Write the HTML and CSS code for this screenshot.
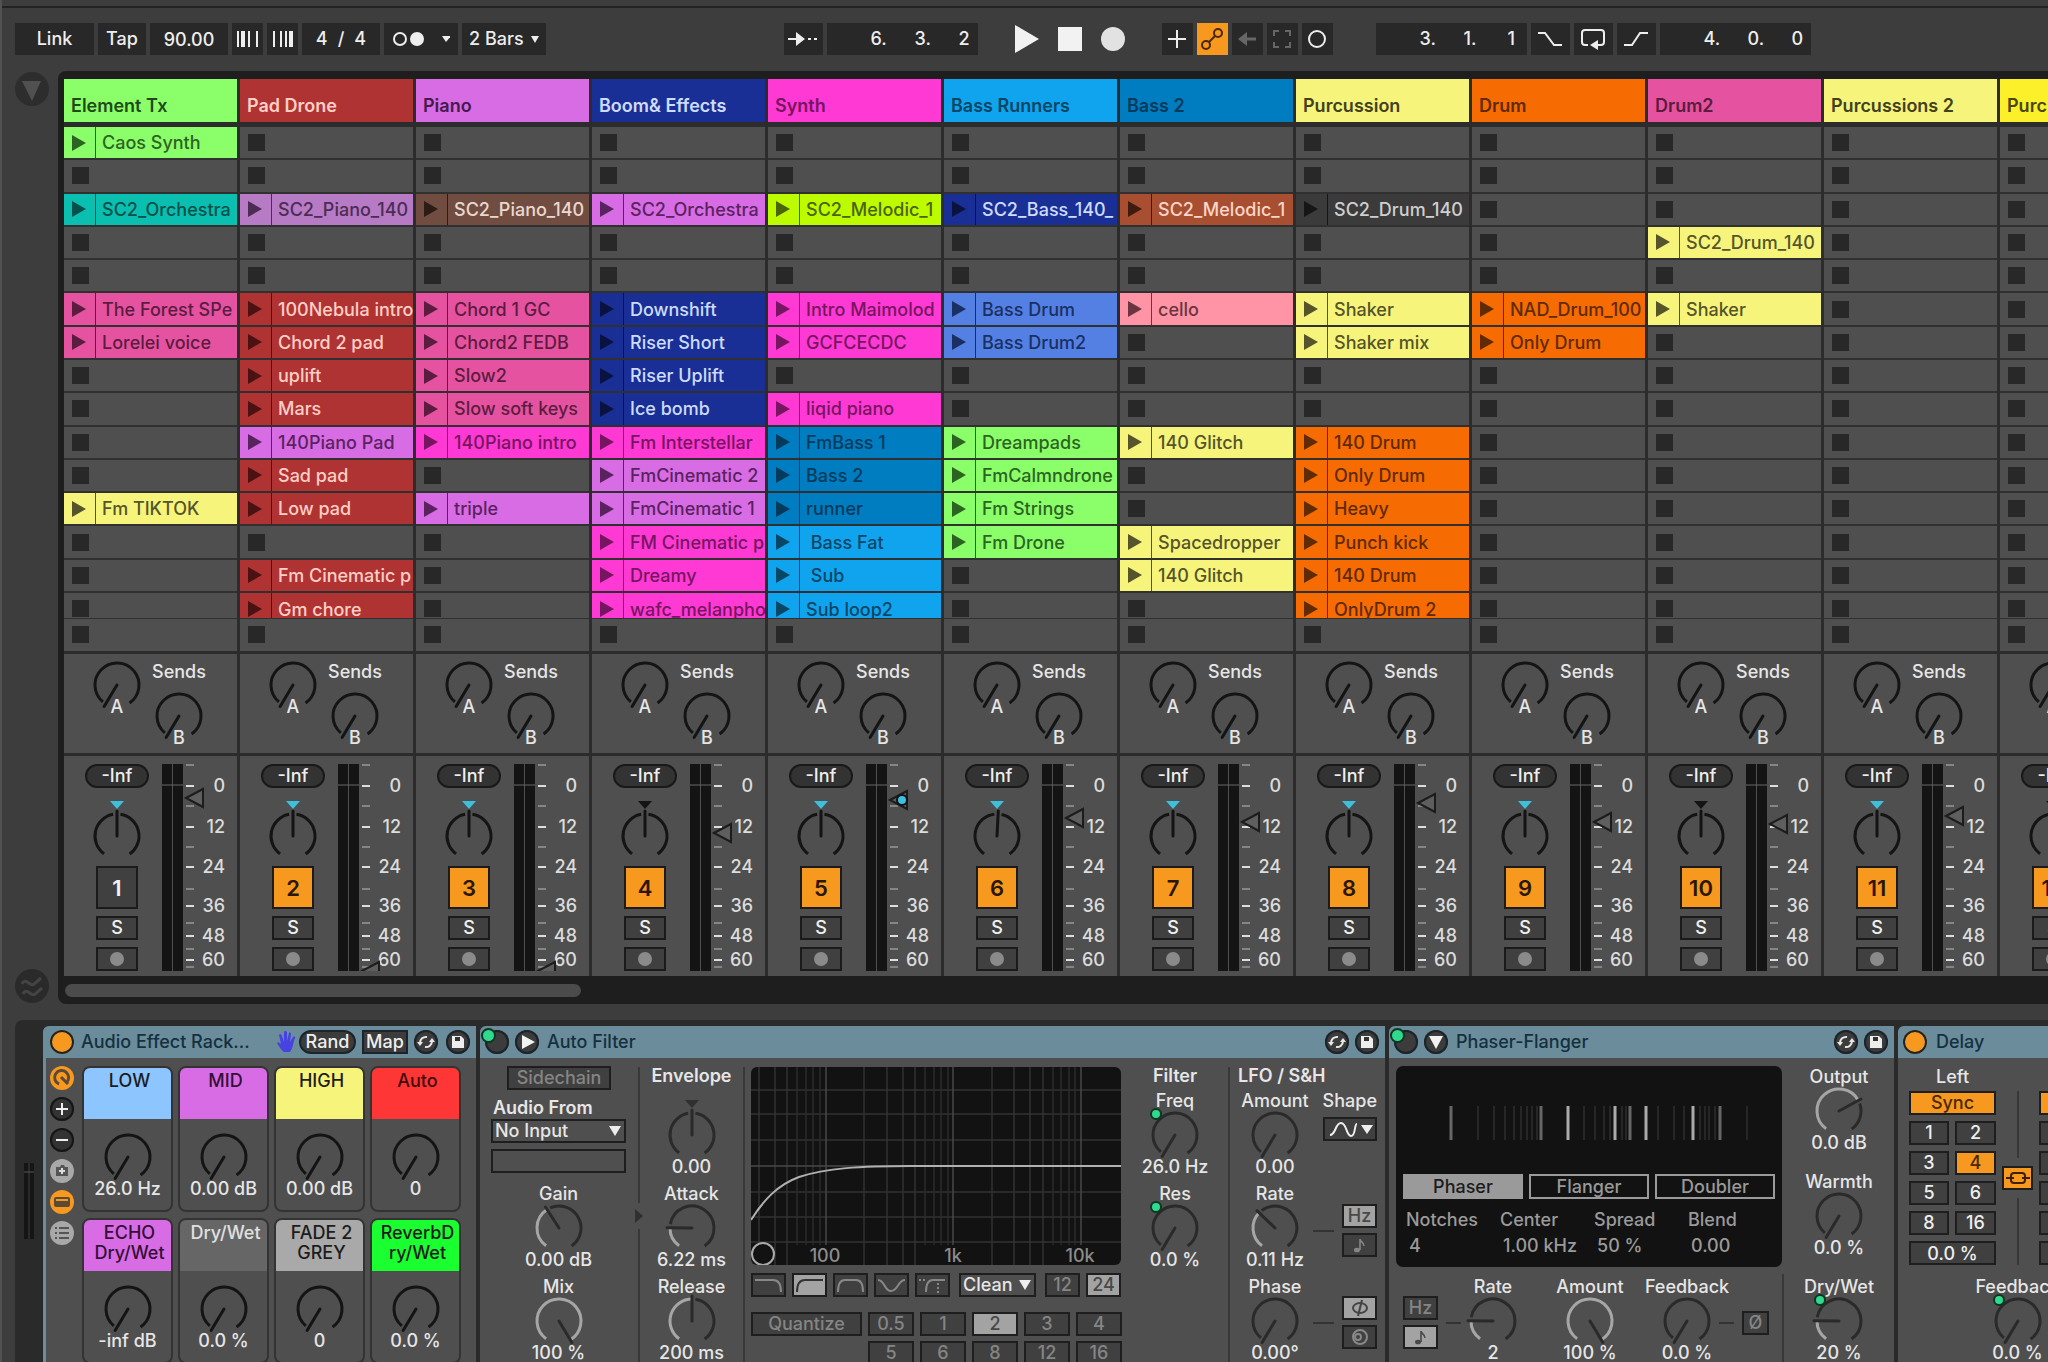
FILE: index.html
```html
<!DOCTYPE html>
<html lang="en">
<head>
<meta charset="utf-8">
<title>Live Set</title>
<link rel="stylesheet" href="styles.css">
</head>
<body>
<svg class="defs" aria-hidden="true">
  <symbol id="i-swap" viewBox="0 0 24 24"><path d="M6 13a6 6 0 0 1 7-6M18 11a6 6 0 0 1-7 6" fill="none" stroke="#e8e8e8" stroke-width="2"/><path d="M3 12l3 4 3-4zM15 12l3-4 3 4z" fill="#e8e8e8"/></symbol>
  <symbol id="i-save" viewBox="0 0 24 24"><path d="M6 6h9l3 3v9H6z" fill="#eee"/><path d="M9 7h5v4H9z" fill="#333"/></symbol>
  <symbol id="i-note" viewBox="0 0 16 20"><ellipse cx="5" cy="15" rx="3" ry="2.3" fill="currentColor"/><path d="M8 15V4c0 3 4 3 4 7" fill="none" stroke="currentColor" stroke-width="1.6"/></symbol>
</svg>

<header class="toolbar">
  <div class="group">
    <button class="tb w80">Link</button>
    <button class="tb w48">Tap</button>
    <input class="tb w78 center" aria-label="Tempo" value="90.00">
    <button class="tb w32" aria-label="Nudge down"><svg width="22" height="16"><path d="M1 0v16M12 0v16M20 0v16" stroke="#eee" stroke-width="2"/><path d="M6 0v16" stroke="#eee" stroke-width="4"/></svg></button>
    <button class="tb w32" aria-label="Nudge up"><svg width="22" height="16"><path d="M2 0v16M9 0v16M14 0v16M20 0v16" stroke="#eee" stroke-width="2"/><path d="M19 0v16" stroke="#eee" stroke-width="4"/></svg></button>
    <button class="tb w78 sig"><span>4</span><span>/</span><span>4</span></button>
    <button class="tb w74" aria-label="Metronome"><svg width="58" height="16"><circle cx="8" cy="8" r="6" fill="none" stroke="#eee" stroke-width="2"/><circle cx="25" cy="8" r="7" fill="#eee"/><path d="M50 5h9l-5 6z" fill="#eee"/></svg></button>
    <div class="pick tb w84"><select aria-label="Quantization"><option>2 Bars</option></select></div>
  </div>
  <div class="middle">
    <div class="group">
      <button class="tb w39" aria-label="Follow"><svg width="30" height="16"><path d="M0 8h10M20 8h3M26 8h3" stroke="#eee" stroke-width="2"/><path d="M8 1l9 7-9 7z" fill="#eee"/></svg></button>
      <div class="tb pos"><input aria-label="Bar" value="6."><input aria-label="Beat" value="3."><input aria-label="Sixteenth" value="2"></div>
    </div>
    <div class="group transport">
      <button aria-label="Play"><svg width="24" height="28"><path d="M0 0l24 14L0 28z" fill="#f2f2f2"/></svg></button>
      <button aria-label="Stop"><svg width="24" height="24"><path d="M0 0h24v24H0z" fill="#f2f2f2"/></svg></button>
      <button aria-label="Record"><svg width="24" height="24"><circle cx="12" cy="12" r="12" fill="#e2e2e2"/></svg></button>
    </div>
    <div class="group">
      <button class="tb w32" aria-label="Overdub"><svg width="18" height="18"><path d="M0 9h18M9 0v18" stroke="#eee" stroke-width="2"/></svg></button>
      <button class="tb w32 on" aria-label="Automation arm"><svg width="22" height="22" fill="none" stroke="#4a2800" stroke-width="2"><circle cx="5" cy="17" r="4"/><circle cx="17" cy="5" r="4"/><path d="M8 14l6-6"/></svg></button>
      <button class="tb w32" aria-label="Re-enable automation"><svg width="18" height="16"><path d="M6 8h12" stroke="#666" stroke-width="3"/><path d="M9 1v14L0 8z" fill="#666"/></svg></button>
      <button class="tb w32" aria-label="Capture"><svg width="18" height="18" fill="none" stroke="#666" stroke-width="2"><path d="M1 6V1h5M12 1h5v5M17 12v5h-5M6 17H1v-5"/></svg></button>
      <button class="tb w32" aria-label="Session record"><svg width="18" height="18"><circle cx="9" cy="9" r="8" fill="none" stroke="#eee" stroke-width="2"/></svg></button>
    </div>
    <div class="group last">
      <div class="tb pos"><input aria-label="Loop bar" value="3."><input aria-label="Loop beat" value="1."><input aria-label="Loop sixteenth" value="1"></div>
      <button class="tb w39" aria-label="Punch in"><svg width="26" height="16"><path d="M1 2h7l9 12h8" fill="none" stroke="#eee" stroke-width="2"/></svg></button>
      <button class="tb w39" aria-label="Loop"><svg width="26" height="22"><path d="M8 17H5a3 3 0 0 1-3-3V5a3 3 0 0 1 3-3h16a3 3 0 0 1 3 3v9a3 3 0 0 1-3 3h-5" fill="none" stroke="#eee" stroke-width="2"/><path d="M18 12v10l-8-5z" fill="#eee"/></svg></button>
      <button class="tb w39" aria-label="Punch out"><svg width="26" height="16"><path d="M1 14h8l8-12h8" fill="none" stroke="#eee" stroke-width="2"/></svg></button>
      <div class="tb pos"><input aria-label="Length bars" value="4."><input aria-label="Length beats" value="0."><input aria-label="Length sixteenths" value="0"></div>
    </div>
  </div>
</header>

<main class="main">
  <aside class="rail">
    <button aria-label="Show browser"><svg width="36" height="36"><circle cx="18" cy="18" r="17" fill="#2d2d2d"/><path d="M8 10h19l-9 20z" fill="#505050"/></svg></button>
    <button aria-label="Groove pool"><svg width="36" height="36"><circle cx="18" cy="18" r="17" fill="#2a2a2a"/><path d="M8 16c4-8 8 4 12 0l7-6M9 26c4-8 8 4 12 0l7-6" fill="none" stroke="#444" stroke-width="3"/></svg></button>
  </aside>
  <section class="session">
    <div class="tracks" id="tracks"></div>
    <div class="scroll"><div class="thumb"></div></div>
  </section>
</main>

<section class="devices">
  <div class="inmeter"><svg width="10" height="76"><path d="M2 0v76M8 0v76" stroke="#151515" stroke-width="4"/><path d="M0 9h10" stroke="#555"/></svg></div>

  <article class="device rack">
    <header class="dhead">
      <button class="round on" aria-label="Device on"></button>
      <h2>Audio Effect Rack...</h2>
      <svg class="hand" width="20" height="22"><path d="M7 21c-3-2-5-6-7-9 1-2 3 0 4 1L2 4c1-2 2-1 3 1l2 6V1c1-2 2-1 3 0v9l2-8c1-1 2 0 2 1l-1 8 3-5c1-1 3 0 2 1-2 5-2 10-5 14z" fill="#4643e0"/></svg>
      <button class="pill">Rand</button>
      <button class="box">Map</button>
      <button class="round" aria-label="Hot-swap"><svg width="24" height="24"><use href="#i-swap"/></svg></button>
      <button class="round" aria-label="Save preset"><svg width="24" height="24"><use href="#i-save"/></svg></button>
    </header>
    <div class="dbody">
      <div class="side">
        <button class="chip amber" aria-label="Macros"><svg width="24" height="24" fill="none" stroke="#5b4a35" stroke-width="3"><path d="M9 18a7 7 0 1 1 7-1"/><path d="M11 11l7 7" /></svg></button>
        <button class="chip" aria-label="Add macro"><svg width="24" height="24"><path d="M6 12h12M12 6v12" stroke="#eee" stroke-width="2"/></svg></button>
        <button class="chip" aria-label="Remove macro"><svg width="24" height="24"><path d="M6 12h12" stroke="#eee" stroke-width="2"/></svg></button>
        <button class="chip grey" aria-label="Variations"><svg width="24" height="24"><path d="M6 8h4l1-2h3l1 2h3v9H6z" fill="#555"/><path d="M9 12h6M12 9v6" stroke="#ddd" stroke-width="2"/></svg></button>
        <button class="chip amber" aria-label="Devices"><svg width="24" height="24"><rect x="4" y="7" width="16" height="10" rx="2" fill="#5b4a35"/><path d="M6 10h12" stroke="#f7981f" stroke-width="2"/></svg></button>
        <button class="chip grey" aria-label="Chains"><svg width="24" height="24"><path d="M5 7h2M5 12h2M5 17h2M9 7h10M9 12h10M9 17h10" stroke="#555" stroke-width="2"/></svg></button>
      </div>
      <div class="macros">
        <div class="macro"><div class="cap sky">LOW</div><i class="knob" data-v="0"></i><b>26.0 Hz</b></div>
        <div class="macro"><div class="cap violet">MID</div><i class="knob" data-v="0"></i><b>0.00 dB</b></div>
        <div class="macro"><div class="cap yellow">HIGH</div><i class="knob" data-v="0"></i><b>0.00 dB</b></div>
        <div class="macro"><div class="cap red">Auto</div><i class="knob" data-v="0"></i><b>0</b></div>
        <div class="macro"><div class="cap violet">ECHO<br>Dry/Wet</div><i class="knob" data-v="0"></i><b>-inf dB</b></div>
        <div class="macro"><div class="cap plain">Dry/Wet</div><i class="knob" data-v="0"></i><b>0.0 %</b></div>
        <div class="macro"><div class="cap grey">FADE 2<br>GREY</div><i class="knob" data-v="0"></i><b>0</b></div>
        <div class="macro"><div class="cap green">ReverbD<br>ry/Wet</div><i class="knob" data-v="0"></i><b>0.0 %</b></div>
      </div>
    </div>
  </article>

  <article class="device filter">
    <header class="dhead">
      <button class="round mapped" aria-label="Device on"></button>
      <button class="round" aria-label="Unfold"><svg width="24" height="24"><path d="M7 5l13 7-13 7z" fill="#f2f2f2"/></svg></button>
      <h2>Auto Filter</h2>
      <button class="round" aria-label="Hot-swap"><svg width="24" height="24"><use href="#i-swap"/></svg></button>
      <button class="round" aria-label="Save preset"><svg width="24" height="24"><use href="#i-save"/></svg></button>
    </header>
    <div class="dbody">
      <div class="col sidechain">
        <button class="sw dim">Sidechain</button>
        <label class="strong" for="af">Audio From</label>
        <div class="pick boxed"><select id="af"><option>No Input</option></select></div>
        <div class="blank"></div>
        <div class="param"><label>Gain</label><i class="knob" data-v=".39"></i><b>0.00 dB</b></div>
        <div class="param"><label>Mix</label><i class="knob" data-v="1"></i><b>100 %</b></div>
      </div>
      <div class="sep"><svg width="12" height="26"><path d="M1 6l8 7-8 7z" fill="#303030"/></svg></div>
      <div class="col env">
        <span class="strong">Envelope</span>
        <div class="param"><label></label><i class="knob" data-v=".5" data-tri="#303030"></i><b>0.00</b></div>
        <div class="param"><label>Attack</label><i class="knob" data-v=".2"></i><b>6.22 ms</b></div>
        <div class="param"><label>Release</label><i class="knob" data-v=".5"></i><b>200 ms</b></div>
      </div>
      <div class="sep"></div>
      <div class="col graphcol">
        <svg class="graph" width="370" height="198" viewBox="0 0 370 198">
          <rect width="370" height="198" rx="6" fill="#121212"/>
          <path d="M0 23h370M0 47h370M0 73h370M0 125h370M0 150h370M0 175h370M8 0v198M24 0v198M36 0v198M113 0v198M136 0v198M152 0v198M164 0v198M241 0v198M263 0v198M279 0v198M292 0v198" stroke="#323232" stroke-width="1.5"/>
          <path d="M46 0v178M55 0v178M62 0v178M69 0v178M174 0v178M183 0v178M190 0v178M197 0v178M302 0v178M310 0v178M318 0v178M324 0v178" stroke="#2b2b2b" stroke-width="1.5"/>
          <path d="M75 0v178M202 0v178M330 0v178M0 99h370" stroke="#484848" stroke-width="1.5"/>
          <path d="M0 153C12 134 26 118 48 110C75 101 110 99 160 99H370" fill="none" stroke="#b0b0b0" stroke-width="2"/>
          <circle cx="12" cy="187" r="11" fill="#121212" stroke="#aaa" stroke-width="2"/>
          <g fill="#8c8c8c" font-size="18" text-anchor="middle"><text x="74" y="195">100</text><text x="202" y="195">1k</text><text x="329" y="195">10k</text></g>
        </svg>
        <div class="types">
          <button class="sw" aria-label="Low-pass"><svg width="31" height="20"><path d="M2 5h18q8 0 8 12" fill="none" stroke="#888" stroke-width="2"/></svg></button>
          <button class="sw lit" aria-label="High-pass"><svg width="31" height="20"><path d="M3 17q0-12 8-12h18" fill="none" stroke="#333" stroke-width="2"/></svg></button>
          <button class="sw" aria-label="Band-pass"><svg width="31" height="20"><path d="M3 17q0-12 7-12h11q7 0 7 12" fill="none" stroke="#888" stroke-width="2"/></svg></button>
          <button class="sw" aria-label="Notch"><svg width="31" height="20"><path d="M2 5c7 0 6 11 13 11S22 5 29 5" fill="none" stroke="#888" stroke-width="2"/></svg></button>
          <button class="sw" aria-label="Morph"><svg width="31" height="20"><path d="M9 17q0-12 7-12h12" fill="none" stroke="#888" stroke-width="2"/><path d="M2 5h8M21 8v10" stroke="#888" stroke-width="2" stroke-dasharray="2 2"/></svg></button>
          <div class="pick boxed clean"><select aria-label="Circuit"><option>Clean</option></select></div>
          <button class="sw dim">12</button>
          <button class="sw lit">24</button>
        </div>
        <div class="quant">
          <button class="sw dim">Quantize</button><button class="sw dim">0.5</button><button class="sw dim">1</button><button class="sw lit">2</button><button class="sw dim">3</button><button class="sw dim">4</button>
          <span></span><button class="sw dim">5</button><button class="sw dim">6</button><button class="sw dim">8</button><button class="sw dim">12</button><button class="sw dim">16</button>
        </div>
      </div>
      <div class="col freq">
        <span class="strong">Filter</span>
        <div class="param"><label>Freq</label><i class="knob" data-v="0" data-map></i><b>26.0 Hz</b></div>
        <div class="param"><label>Res</label><i class="knob" data-v="0" data-map></i><b>0.0 %</b></div>
      </div>
      <div class="sep"></div>
      <div class="lfo">
        <span class="strong">LFO / S&amp;H</span>
        <div class="col">
          <div class="param"><label>Amount</label><i class="knob" data-v="0"></i><b>0.00</b></div>
          <div class="param"><label>Rate</label><i class="knob" data-v=".345"></i><b>0.11 Hz</b></div>
          <div class="param"><label>Phase</label><i class="knob" data-v="0"></i><b>0.00°</b></div>
        </div>
        <div class="modes">
          <div class="shape"><span>Shape</span><button class="sw" aria-label="LFO shape"><svg width="48" height="20"><path d="M4 16C10 16 9 4 15 4S20 17 25 17 28 5 31 5" fill="none" stroke="#eee" stroke-width="2"/><path d="M35 6h12l-6 9z" fill="#eee"/></svg></button></div>
          <div class="pair"><hr><div><button class="sw lit">Hz</button><button class="sw dim" aria-label="Sync"><svg width="16" height="20"><use href="#i-note"/></svg></button></div></div>
          <div class="pair"><hr><div><button class="sw lit" aria-label="Phase mode"><svg width="20" height="20" fill="none" stroke="#444" stroke-width="2"><ellipse cx="10" cy="10" rx="7" ry="5"/><path d="M12 2L8 18"/></svg></button><button class="sw dim" aria-label="Spin mode"><svg width="20" height="20" fill="none" stroke="#888" stroke-width="2"><circle cx="10" cy="10" r="7"/><circle cx="8" cy="10" r="3"/></svg></button></div></div>
        </div>
      </div>
    </div>
  </article>

  <article class="device phaser">
    <header class="dhead">
      <button class="round mapped" aria-label="Device on"></button>
      <button class="round" aria-label="Fold"><svg width="24" height="24"><path d="M5 6h14l-7 13z" fill="#f2f2f2"/></svg></button>
      <h2>Phaser-Flanger</h2>
      <button class="round" aria-label="Hot-swap"><svg width="24" height="24"><use href="#i-swap"/></svg></button>
      <button class="round" aria-label="Save preset"><svg width="24" height="24"><use href="#i-save"/></svg></button>
    </header>
    <div class="dbody">
      <div class="phmain">
        <div class="screen">
          <svg width="386" height="34"><path d="M82 0v34M98 0v34M109 0v34M118 0v34M125 0v34M131 0v34M136 0v34M141 0v34M188 0v34M199 0v34M208 0v34M214 0v34M226 0v34M230 0v34M262 0v34M278 0v34M288 0v34M304 0v34M309 0v34M313 0v34M319 0v34M351 0v34" stroke="#3a3a3a"/><path d="M55 0v34M145 0v34M234 0v34M324 0v34" stroke="#666" stroke-width="3"/><path d="M172 0v34M219 0v34M250 0v34M297 0v34" stroke="#aaa" stroke-width="3"/></svg>
          <div class="tabs"><button class="active">Phaser</button><button>Flanger</button><button>Doubler</button></div>
          <dl><div><dt>Notches</dt><dd>4</dd></div><div><dt>Center</dt><dd>1.00 kHz</dd></div><div><dt>Spread</dt><dd>50 %</dd></div><div><dt>Blend</dt><dd>0.00</dd></div></dl>
        </div>
        <div class="phlow">
          <div class="pair rev"><div><button class="sw dim">Hz</button><button class="sw lit" aria-label="Sync"><svg width="16" height="20"><use href="#i-note"/></svg></button></div><hr></div>
          <div class="param"><label>Rate</label><i class="knob" data-v=".2"></i><b>2</b></div>
          <div class="param wide"><label>Amount</label><i class="knob" data-v="1"></i><b>100 %</b></div>
          <div class="param"><label>Feedback</label><i class="knob" data-v="0"></i><b>0.0 %</b></div>
          <div class="pair inv"><hr><div><button class="sw dim">Ø</button></div></div>
        </div>
      </div>
      <div class="col out">
        <div class="param"><label>Output</label><i class="knob" data-v=".706"></i><b>0.0 dB</b></div>
        <div class="param"><label>Warmth</label><i class="knob" data-v="0"></i><b>0.0 %</b></div>
        <div class="param"><label>Dry/Wet</label><i class="knob" data-v=".2" data-map></i><b>20 %</b></div>
      </div>
    </div>
  </article>

  <article class="device delay">
    <header class="dhead"><button class="round on" aria-label="Device on"></button><h2>Delay</h2></header>
    <div class="dbody">
      <div class="times">
        <div class="chan"><span>Left</span><button class="sw amber">Sync</button><button class="sw">1</button><button class="sw">2</button><button class="sw">3</button><button class="sw amber">4</button><button class="sw">5</button><button class="sw">6</button><button class="sw">8</button><button class="sw">16</button><input class="sw" aria-label="Left offset" value="0.0 %"></div>
        <div class="link"><i></i><button class="sw amber" aria-label="Link channels"><svg width="26" height="20" fill="none" stroke="#3c2000" stroke-width="2"><rect x="6" y="5" width="14" height="10" rx="3"/><path d="M1 10h8M17 10h8"/></svg></button><i></i></div>
        <div class="chan"><span>Right</span><button class="sw amber">Sync</button><button class="sw">1</button><button class="sw">2</button><button class="sw">3</button><button class="sw">4</button><button class="sw">5</button><button class="sw">6</button><button class="sw">8</button><button class="sw">16</button><input class="sw" aria-label="Right offset" value="0.0 %"></div>
      </div>
      <div class="param"><label>Feedback</label><i class="knob" data-v="0" data-map></i><b>0.0 %</b></div>
    </div>
  </article>
</section>
<script src="app.js"></script>
</body>
</html>
```
FILE: styles.css
```css
* { box-sizing: border-box; }
body {
  margin: 0; height: 100vh; overflow: hidden;
  display: flex; flex-direction: column;
  border-left: 2px solid #525252;
  background: #3d3d3d; color: #e6e6e6;
  font: 500 18px/20px Inter, "Noto Sans", sans-serif;
}
button, input, select { font: inherit; color: inherit; margin: 0; padding: 0; border: 0; background: none; border-radius: 0; min-width: 0; }
button { display: flex; align-items: center; justify-content: center; white-space: nowrap; }
h2, dl, dd, hr { margin: 0; }
svg { display: block; flex: none; }
.defs { position: absolute; width: 0; height: 0; }

/* Toolbar */
.toolbar { flex: none; display: flex; align-items: center; margin-top: 6px; border-top: 2px solid #232323; padding: 15px 0 16px 13px; }
.group { display: flex; align-items: center; gap: 4px; }
.middle { display: flex; align-items: center; margin: 0 auto; }
.tb { height: 32px; background: #282828; color: #eee; }
.tb.on { background: #f7981f; }
.w32 { width: 31px; } .w39 { width: 39px; } .w48 { width: 48px; } .w74 { width: 74px; }
.w78 { width: 78px; } .w80 { width: 79px; } .w84 { width: 84px; }
.center { text-align: center; }
.sig { gap: 10px; }
.pos { width: 151px; display: flex; justify-content: flex-end; padding-right: 7px; }
.pos input { width: 44px; }
.pos input:last-child { width: 12px; }
.transport { gap: 19px; margin: 0 37px; }
.last { margin-left: 43px; }
.pick { display: grid; align-items: center; }
.pick select { grid-area: 1 / 1; appearance: none; width: 100%; height: 100%; padding-left: 7px; outline: 0; }
.pick::after { content: ""; grid-area: 1 / 1; justify-self: end; margin-right: 7px; border: 4px solid transparent; border-top: 7px solid #eee; border-bottom: 0; pointer-events: none; }

/* Session view */
.main { flex: none; display: flex; }
.rail { flex: none; width: 56px; padding-left: 12px; display: flex; flex-direction: column; align-items: flex-start; justify-content: space-between; }
.session { flex: 1; min-width: 0; overflow: hidden; background: #1e1e1e; border-radius: 8px 0 0 8px; padding: 8px 0 0 6px; }
.tracks { display: flex; gap: 3px; background: #2c2c2c; width: max-content; }
.track { flex: none; width: 173px; }
.name { height: 43px; padding: 17px 0 0 7px; margin-bottom: 5px; background: var(--bg); color: var(--ink); font-weight: 600; white-space: nowrap; overflow: hidden; }
.clips { display: grid; grid-template-rows: repeat(14, 1fr) 26px 32px; height: 524px; background: #303030; margin-bottom: 3px; }
.slot { display: flex; align-items: center; justify-content: flex-start; width: 100%; margin-bottom: 2px; overflow: hidden; background: #4f4f4f; padding-left: 8px; min-height: 0; }
.slot:nth-child(15) { align-items: flex-start; padding-top: 7px; margin-bottom: 1px; }
.slot:last-child { margin-bottom: 0; }
.stop { width: 17px; height: 17px; background: #282828; flex: none; }
.clip { padding-left: 0; background: var(--bg); color: var(--ink); }
.clip .launch { flex: none; width: 32px; align-self: stretch; display: flex; align-items: center; padding-left: 8px; border-right: 1px solid var(--play, var(--ink)); }
.clip .launch::before { content: ""; border: 8px solid transparent; border-left: 14px solid var(--play, var(--ink)); border-right: 0; }
.slot.clip:nth-child(15) { padding-top: 0; }
.slot.clip:nth-child(15) .launch { align-items: flex-start; padding-top: 8px; }
.slot.clip:nth-child(15) .title { padding-top: 7px; }
.title { padding: 1px 0 0 6px; white-space: pre; }

.green { --bg: #8aff69; --ink: #2d6322; }
.red { --bg: #af3333; --ink: #ffcfc6; --play: #4a1212; }
.violet { --bg: #d86ce4; --ink: #592360; }
.navy { --bg: #1a2f96; --ink: #cddcff; --play: #0a1340; }
.magenta { --bg: #ff39d4; --ink: #761560; }
.azure { --bg: #10a4ee; --ink: #084666; }
.ocean { --bg: #007dc0; --ink: #053a5a; }
.yellow { --bg: #f7f47c; --ink: #55542a; }
.orange { --bg: #f66c03; --ink: #602a03; }
.pink { --bg: #e553a0; --ink: #5c1c40; }
.lemon { --bg: #fcf02a; --ink: #4a4610; }
.teal { --bg: #0abfb0; --ink: #06504b; }
.lilac { --bg: #b67bc4; --ink: #4c2c54; }
.brown { --bg: #714d41; --ink: #ead8d0; --play: #2d1b15; }
.lime { --bg: #bdfb00; --ink: #4c6408; }
.corn { --bg: #5480e4; --ink: #1a2f62; }
.rust { --bg: #a94f31; --ink: #f8d6c8; --play: #401c10; }
.rose { --bg: #ff94a6; --ink: #6a3540; }
.coal { --bg: #3b3b3b; --ink: #cfcfcf; --play: #161616; }
.name.green { --ink: #1f4a18; }
.name.yellow { --ink: #42411c; }
.name.violet { --ink: #451a4c; }

.sends { display: flex; gap: 10px; height: 99px; padding: 5px 0 0 27px; background: #4f4f4f; margin-bottom: 3px; }
.send { width: 52px; display: flex; flex-direction: column; align-items: center; }
.send .knob + span { margin-top: -14px; }
.send .knob { --k: #141414; }
.send.b .knob { margin-top: 8px; }
.send.b { padding-top: 3px; }
.mixer { display: flex; height: 220px; padding: 8px 0 0 21px; background: #4f4f4f; }
.strip { width: 64px; display: flex; flex-direction: column; align-items: center; --k: #141414; }
.level { width: 64px; height: 24px; border: 2px solid #191919; border-radius: 12px; background: #333; text-align: center; color: #eee; }
.strip .knob { margin-top: 22px; }
.act, .solo, .arm { width: 42px; border: 2px solid #1b1b1b; background: #404040; color: #f2f2f2; }
.act { height: 43px; margin-top: 4px; font-size: 22px; font-weight: 600; }
.act.on { background: #f7981f; color: #2b1600; }
.solo, .arm { height: 24px; margin-top: 7px; }
.arm::before { content: ""; width: 14px; height: 14px; border-radius: 50%; background: #8a8a8a; }
.meter { margin-left: 13px; }
.scroll { height: 28px; padding: 8px 0 0 1px; }
.thumb { width: 26%; height: 13px; border-radius: 7px; background: #4b4b4b; }

/* Device chain */
.devices { flex: 1; min-height: 0; display: flex; gap: 4px; margin: 16px 0 0 13px; padding-top: 6px; background: #2a2a2a; border-radius: 8px 0 0 0; overflow: hidden; --k: #2a2a2a; }
.inmeter { width: 24px; flex: none; padding: 137px 0 0 9px; }
.device { flex: none; background: #4f4f4f; border-radius: 6px 0 0 0; overflow: hidden; }
.dhead { display: flex; align-items: center; gap: 6px; height: 32px; padding: 0 6px 0 5px; background: #6b8c9b; color: #14303e; }
.dhead h2 { flex: 1; font-size: 18px; font-weight: 500; padding-left: 1px; white-space: nowrap; }
.round { width: 24px; height: 24px; flex: none; border-radius: 50%; background: #3c3c3c; box-shadow: inset 0 0 0 2px #1a242a; }
.round.on { background: #f7981f; }
.mapped { position: relative; }
.mapped::before { content: ""; position: absolute; left: -4px; top: -2px; width: 11px; height: 11px; border-radius: 50%; background: #2fd98d; border: 2px solid #0c3522; }
.pill, .box { height: 24px; border: 2px solid #1a242a; background: #3c3c3c; color: #eee; }
.pill { width: 57px; border-radius: 12px; }
.box { width: 46px; }
.dbody { display: flex; }
.knob { display: block; width: 52px; height: 52px; }
.knob svg { overflow: visible; }
b { font-weight: 500; white-space: nowrap; }
.strong { font-weight: 600; white-space: nowrap; }
.sw { height: 24px; border: 2px solid #1e1e1e; background: #404040; color: #eee; text-align: center; }
.sw.dim { color: #858585; }
.sw.lit { background: #a3a3a3; color: #484848; }
.sw.amber { background: #f7981f; color: #4a2800; }
.col { display: flex; flex-direction: column; align-items: center; }
.param { display: flex; flex-direction: column; align-items: center; height: 86px; margin-bottom: 7px; width: 64px; }
.param label { height: 20px; white-space: nowrap; }
.param .knob { margin: -2px 0 -4px; }
.sep { flex: none; width: 2px; margin-top: 9px; background: #383838; }

.rack { width: 433px; }
.rack .dhead { padding-left: 7px; }
.rack .pill { margin-left: -4px; }
.rack .round:last-child { margin-left: 2px; }
.rack .dbody { border-left: 3px solid #6b8c9b; padding: 8px 0 0 4px; gap: 8px; --k: #141414; }
.side { display: flex; flex-direction: column; gap: 7px; }
.chip { width: 24px; height: 24px; border-radius: 50%; background: #333; box-shadow: inset 0 0 0 2px #161616; }
.chip.amber { background: #f7981f; box-shadow: none; }
.chip.grey { background: #a8a8a8; box-shadow: none; }
.macros { display: grid; grid-template-columns: repeat(4, 91px); gap: 6px 5px; }
.macro { height: 146px; border: 2px solid #333; border-radius: 8px; overflow: hidden; display: flex; flex-direction: column; align-items: center; }
.cap { width: 100%; height: 51px; padding: 3px 0 0 4px; text-align: center; background: var(--bg); color: #1c1c1c; }
.cap.sky { --bg: #8cc5ff; } .cap.red { --bg: #ff3636; color: #3e0a0a; }
.cap.plain { --bg: #666; color: #e0e0e0; } .cap.grey { --bg: #a9a9a9; } .cap.green { --bg: #1aff2f; }
.cap.violet { color: #321036; }
.macro .knob { margin: 12px 0 -4px; }

.filter { width: 905px; }
.filter .dhead h2, .phaser .dhead h2 { padding-left: 2px; }
.sidechain { padding: 8px 12px 0 11px; width: 158px; align-items: stretch; }
.sidechain > .sw { width: 104px; margin-left: 16px; }
.sidechain .strong { margin: 8px 0 1px 2px; }
.sidechain .param { align-self: center; }
.boxed { height: 24px; border: 2px solid #1e1e1e; }
.boxed select { padding-left: 2px; }
.boxed::after { border-width: 6px; border-top-width: 10px; margin-right: 3px; }
.blank { height: 24px; border: 2px solid #1e1e1e; margin: 6px 0 11px; }
.sep svg { margin: 136px 0 0 -4px; background: #4f4f4f; }
.env { width: 103px; padding-top: 8px; }
.env .strong, .freq .strong { margin-bottom: 5px; }
.graphcol { padding: 9px 0 0 6px; align-items: flex-start; }
.types { display: flex; gap: 6px; margin: 8px 0 15px; }
.types .sw { width: 35px; }
.clean { width: 77px; margin: 0 3px; }
.quant { display: grid; grid-template-columns: 111px repeat(5, 46px); gap: 5px 6px; width: 371px; }
.freq { width: 106px; padding-top: 8px; }
.lfo { display: grid; grid-template-columns: 74px 65px; grid-template-rows: 20px auto; row-gap: 5px; padding: 8px 0 0 8px; }
.lfo > .strong { grid-column: span 2; }
.modes { display: flex; flex-direction: column; align-items: flex-end; }
.shape { display: flex; flex-direction: column; align-items: flex-end; gap: 6px; margin-bottom: 63px; }
.shape .sw { width: 54px; }
.pair { display: flex; align-items: center; justify-content: flex-end; gap: 8px; margin-bottom: 39px; }
.pair > div { display: flex; flex-direction: column; gap: 5px; }
.pair .sw { width: 35px; }
.pair hr { width: 21px; border: 0; border-top: 2px solid #333; }

.phaser { width: 505px; }
.phmain { padding: 8px 0 0 7px; width: 395px; }
.screen { width: 386px; height: 201px; border-radius: 7px; background: #121212; padding-top: 40px; color: #9a9a9a; }
.tabs { display: flex; gap: 6px; padding: 34px 7px 0; }
.tabs button { flex: 1; height: 25px; border: 2px solid #9a9a9a; }
.tabs .active { background: #9a9a9a; color: #1c1c1c; }
.screen dl { display: grid; grid-template-columns: repeat(4, 94px); padding: 11px 0 0 10px; white-space: nowrap; }
.screen dd { padding: 6px 0 0 3px; }
.phlow { display: flex; align-items: center; width: 388px; height: 110px; margin-top: 7px; padding: 0 0 18px 7px; border-right: 2px solid #383838; }
.phlow .param { margin: 0; }
.phlow .wide { width: 130px; }
.phlow .pair { margin: 5px 0 0; }
.phlow .pair hr { width: 15px; }
.phlow .inv .sw { width: 27px; }
.out { width: 112px; padding-top: 9px; gap: 12px; }

.delay { width: 260px; }
.delay .dhead h2 { padding-left: 3px; }
.delay .dbody { flex-direction: column; align-items: center; width: 239px; padding-top: 9px; }
.times { display: flex; gap: 6px; height: 198px; margin-bottom: 12px; }
.chan { display: grid; grid-template-columns: 40px 41px; gap: 6px; width: 87px; align-content: start; }
.chan > span { grid-column: span 2; height: 18px; text-align: center; }
.chan > span + .sw, .chan > input { grid-column: span 2; width: 100%; }
.link { width: 31px; display: flex; flex-direction: column; align-items: center; gap: 8px; padding-top: 24px; }
.link i { flex: 1; width: 2px; background: #383838; }
.link .sw { width: 31px; }
```
FILE: app.js
```js
const tracks = [
  ["Element Tx", "green", 798, 1, { 1: ["Caos Synth", "green"], 3: ["SC2_Orchestra", "teal"], 6: ["The Forest SPe", "pink"], 7: ["Lorelei voice", "pink"], 12: ["Fm TIKTOK", "yellow"] }],
  ["Pad Drone", "red", 971, 1, { 3: ["SC2_Piano_140", "lilac"], 6: ["100Nebula intro", "red"], 7: ["Chord 2 pad", "red"], 8: ["uplift", "red"], 9: ["Mars", "red"], 10: ["140Piano Pad", "violet"], 11: ["Sad pad", "red"], 12: ["Low pad", "red"], 14: ["Fm Cinematic p", "red"], 15: ["Gm chore", "red"] }],
  ["Piano", "violet", 971, 1, { 3: ["SC2_Piano_140", "brown"], 6: ["Chord 1 GC", "pink"], 7: ["Chord2 FEDB", "pink"], 8: ["Slow2", "pink"], 9: ["Slow soft keys", "pink"], 10: ["140Piano intro", "magenta"], 12: ["triple", "violet"] }],
  ["Boom& Effects", "navy", 833, 0, { 3: ["SC2_Orchestra", "violet"], 6: ["Downshift", "navy"], 7: ["Riser Short", "navy"], 8: ["Riser Uplift", "navy"], 9: ["Ice bomb", "navy"], 10: ["Fm Interstellar", "magenta"], 11: ["FmCinematic 2", "violet"], 12: ["FmCinematic 1", "violet"], 13: ["FM Cinematic p", "magenta"], 14: ["Dreamy", "magenta"], 15: ["wafc_melanpho", "magenta"] }],
  ["Synth", "magenta", 800, 1, { 3: ["SC2_Melodic_1", "lime"], 6: ["Intro Maimolod", "magenta"], 7: ["GCFCECDC", "magenta"], 9: ["liqid piano", "magenta"], 10: ["FmBass 1", "ocean"], 11: ["Bass 2", "ocean"], 12: ["runner", "ocean"], 13: [" Bass Fat", "azure"], 14: [" Sub", "azure"], 15: ["Sub loop2", "azure"] }],
  ["Bass Runners", "azure", 818, 1, { 3: ["SC2_Bass_140_", "navy"], 6: ["Bass Drum", "corn"], 7: ["Bass Drum2", "corn"], 10: ["Dreampads", "green"], 11: ["FmCalmndrone", "green"], 12: ["Fm Strings", "green"], 13: ["Fm Drone", "green"] }],
  ["Bass 2", "ocean", 822, 1, { 3: ["SC2_Melodic_1", "rust"], 6: ["cello", "rose"], 10: ["140 Glitch", "yellow"], 13: ["Spacedropper", "yellow"], 14: ["140 Glitch", "yellow"] }],
  ["Purcussion", "yellow", 803, 1, { 3: ["SC2_Drum_140", "coal"], 6: ["Shaker", "yellow"], 7: ["Shaker mix", "yellow"], 10: ["140 Drum", "orange"], 11: ["Only Drum", "orange"], 12: ["Heavy", "orange"], 13: ["Punch kick", "orange"], 14: ["140 Drum", "orange"], 15: ["OnlyDrum 2", "orange"] }],
  ["Drum", "orange", 822, 1, { 6: ["NAD_Drum_100", "orange"], 7: ["Only Drum", "orange"] }],
  ["Drum2", "pink", 824, 0, { 4: ["SC2_Drum_140", "yellow"], 6: ["Shaker", "yellow"] }],
  ["Purcussions 2", "yellow", 816, 1, {}],
  ["Purc", "lemon", 816, 0, {}],
];

const ticks = [[0, 0], [21, 1, "0"], [41, 0], [62, 1, "12"], [82, 0], [102, 1, "24"], [124, 0], [141, 1, "36"], [158, 0], [171, 1, "48"], [184, 0], [195, 1, "60"], [202, 0]];

function meter(fader, dot) {
  const y = fader - 764;
  const marks = ticks.map(([t, major, label]) =>
    `<path d="M24 ${t + 1}h8" stroke="${major ? "#ddd" : "#858585"}" stroke-width="2"/>` +
    (label ? `<text x="63" y="${t + 7}">${label}</text>` : "")).join("");
  return `<svg class="meter" width="66" height="207" fill="#dcdcdc" text-anchor="end">
    <path d="M0 0h10v207H0zM11 0h10v207H11z" fill="#141414"/><path d="M0 21h21" stroke="#666"/>${marks}
    <path d="M24 ${y}l17-9v18z" fill="#5e5e5e" stroke="#1c1c1c" stroke-width="2"/>
    ${dot ? `<circle cx="36" cy="${y}" r="5" fill="#3cc0dc" stroke="#111" stroke-width="2"/>` : ""}</svg>`;
}

function slot(clip) {
  return clip
    ? `<button class="slot clip ${clip[1]}"><span class="launch"></span><span class="title">${clip[0]}</span></button>`
    : `<button class="slot" aria-label="Stop"><span class="stop"></span></button>`;
}

document.getElementById("tracks").innerHTML = tracks.map(([name, color, fader, panned, clips], n) => `
  <div class="track">
    <div class="name ${color}">${name.replace("&", "&amp;")}</div>
    <div class="clips">${Array.from({ length: 16 }, (_, r) => slot(clips[r + 1])).join("")}</div>
    <div class="sends">
      <div class="send"><i class="knob" data-v="0"></i><span>A</span></div>
      <div class="send b"><span>Sends</span><i class="knob" data-v="0"></i><span>B</span></div>
    </div>
    <div class="mixer">
      <div class="strip">
        <div class="level">-Inf</div>
        <i class="knob" data-v="${n === 5 ? 0.51 : 0.5}" data-tri="${panned ? "#3cc0dc" : "#141414"}"></i>
        <button class="act${n ? " on" : ""}">${n + 1}</button>
        <button class="solo">S</button>
        <button class="arm" aria-label="Arm"></button>
      </div>
      ${meter(fader, n === 4)}
    </div>
  </div>`).join("");

function point(deg, r) {
  const a = deg * Math.PI / 180;
  return `${(r * Math.sin(a)).toFixed(2)} ${(-r * Math.cos(a)).toFixed(2)}`;
}
function arc(from, to, stroke) {
  if (to <= from) return "";
  return `<path d="M${point(from, 22)}A22 22 0 ${to - from > 180 ? 1 : 0} 1 ${point(to, 22)}" style="stroke:${stroke}"/>`;
}
document.querySelectorAll(".knob").forEach(el => {
  const v = Number(el.dataset.v);
  const angle = -149 + 298 * v;
  const tri = el.dataset.tri;
  el.innerHTML = `<svg width="52" height="52" viewBox="-26 -26 52 52" fill="none" stroke-width="3">
    ${arc(-144, angle - (tri ? 10 : 0), tri ? "var(--k)" : "#a6a6a6")}
    ${arc(angle + 9, 145, "var(--k)")}
    <path d="M0 0L${point(angle, 25)}" style="stroke:var(--k)" stroke-linecap="round"/>
    ${tri ? `<path d="M-7 -35h14l-7 8z" fill="${tri}"/>` : ""}
    ${"map" in el.dataset ? `<circle cx="-19" cy="-21" r="5" fill="#2fd98d" stroke="#0c3522" stroke-width="2"/>` : ""}
  </svg>`;
});
```
